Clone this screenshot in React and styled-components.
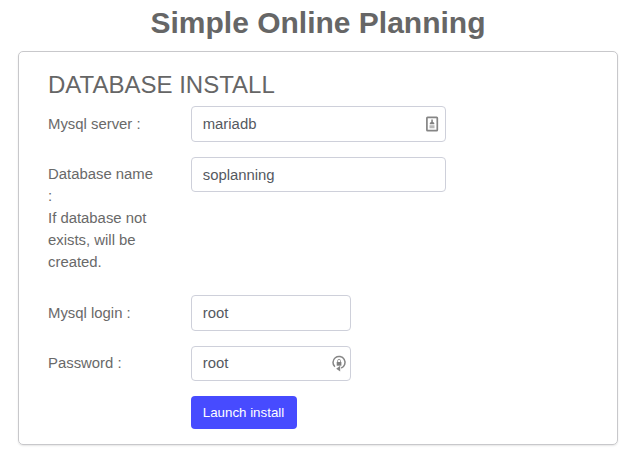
import React from 'react';
import styled, { createGlobalStyle } from 'styled-components';

const Global = createGlobalStyle`
  * { box-sizing: border-box; }
  body { margin: 0; background: #fff; font-family: "Liberation Sans", Arial, sans-serif; font-size: 14.88px; line-height: 22px; color: #696969; }
`;
const Page = styled.main`
  width: 642px; height: 460px; padding: 5px 24px 0 18px; overflow: hidden;
`;
const Title = styled.h1`
  margin: 0 0 10px; text-align: center; font-size: 30px; line-height: 36px; font-weight: 700; color: #666;
`;
const Panel = styled.section`
  width: 600px; height: 394px; padding: 19px 29px 0; border: 1px solid #c8c8cb; border-radius: 5px;
  box-shadow: 0 1px 2px rgba(0, 0, 0, 0.1);
`;
const Heading = styled.h2`
  margin: 0 0 7px; font-size: 24px; line-height: 28px; font-weight: 400; color: #666;
`;
const Row = styled.div`
  display: flex; align-items: flex-start; height: ${(p) => p.$height}px;
`;
const Label = styled.label`
  width: 143px; padding: ${(p) => p.$top ?? 7}px 35px 0 0; flex: none;
`;
const Field = styled.div`
  position: relative; width: ${(p) => p.$width}px; height: ${(p) => p.$tall ? 36 : 35}px;
`;
const Input = styled.input`
  width: 100%; height: 100%; padding: 0 10.7px ${(p) => p.$lift ?? 0}px; border: 1px solid #ced0da; border-radius: 4px;
  background: #fff; color: #55595f; font: 14.88px "Liberation Sans", Arial, sans-serif; outline: none;
`;
const FieldIcon = styled.svg`
  position: absolute; right: 4px; top: 9px; width: 18px; height: 18px;
`;
const Button = styled.button`
  margin-left: 143px; width: 106px; height: 33px; padding: 0 1px 0 0; border: 0; border-radius: 4px;
  background: #474bff; color: #fff; font: 13.33px "Liberation Sans", Arial, sans-serif;
`;

export default function App() {
  return (
    <Page>
      <Global />
      <Title>Simple Online Planning</Title>
      <Panel>
        <Heading>DATABASE INSTALL</Heading>
        <Row $height={51}>
          <Label>Mysql server :</Label>
          <Field $width={255} $tall>
            <Input $lift={1} defaultValue="mariadb" />
            <FieldIcon viewBox="0 0 18 18" fill="none">
              <rect x="2.9" y="2.4" width="10.4" height="13.3" rx=".7" stroke="#858585" strokeWidth="1.7" />
              <path d="M7.3 4.5h1.5v2.2l1.5 1.3v1.2H5.8V8l1.5-1.3z" fill="#808080" />
              <path d="M5.5 11h5M5.5 12.5h5" stroke="#b8b8b8" strokeWidth="1.3" />
            </FieldIcon>
          </Field>
        </Row>
        <Row $height={138}>
          <Label $top={6}>Database name :<br />If database not exists, will be created.</Label>
          <Field $width={255}><Input defaultValue="soplanning" /></Field>
        </Row>
        <Row $height={51}>
          <Label>Mysql login :</Label>
          <Field $width={160} $tall><Input $lift={1} defaultValue="root" /></Field>
        </Row>
        <Row $height={50}>
          <Label $top={6}>Password :</Label>
          <Field $width={160}>
            <Input $lift={2} defaultValue="root" />
            <FieldIcon viewBox="0 0 18 18" fill="none">
              <path d="M5.9 11.8A6 6 0 1 1 12.2 13" stroke="#858585" strokeWidth="1.5" />
              <rect x="7.7" y="7" width="4.7" height="3.7" fill="#808080" />
              <path d="M8.6 7V5.8a1.45 1.45 0 0 1 2.9 0V7" stroke="#999" />
              <path d="m7.2 13.8 4-3v5.8z" fill="#858585" />
            </FieldIcon>
          </Field>
        </Row>
        <Button>Launch install</Button>
      </Panel>
    </Page>
  );
}
